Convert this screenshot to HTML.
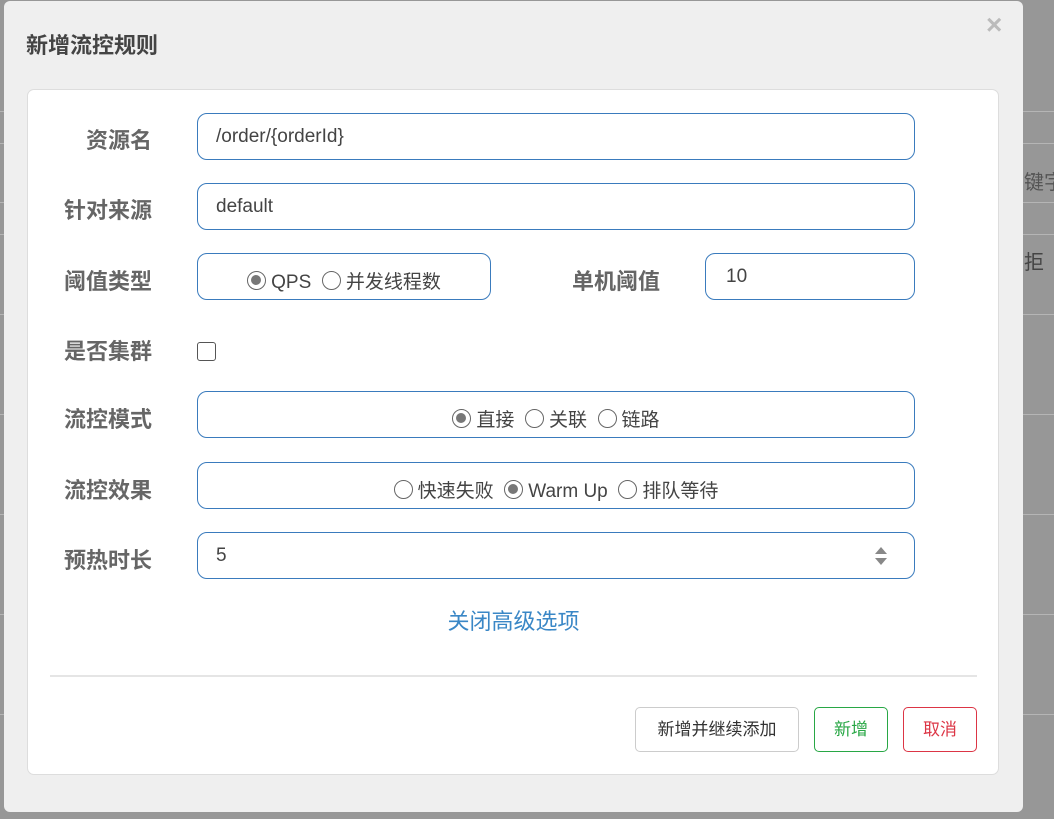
<!DOCTYPE html>
<html><head><meta charset="utf-8"><style>
*{box-sizing:border-box;margin:0;padding:0}
body{width:1054px;height:819px;background:#979797;position:relative;overflow:hidden;font-family:"Liberation Sans","Noto Sans CJK SC",sans-serif}
.hl{position:absolute;height:1px;background:#b5b5b5;left:0;width:1054px}
.modal{position:absolute;left:4px;top:1px;width:1019px;height:811px;background:#efefef;border-radius:6px}
.title{position:absolute;left:22px;top:27px;font-size:22px;font-weight:bold;color:#444}
.close{position:absolute;left:982px;top:8px;font-size:28px;color:#bbb;font-weight:bold}
.card{position:absolute;left:27px;top:89px;width:972px;height:686px;background:#fff;border:1px solid #ddd;border-radius:7px}
.lbl{position:absolute;font-size:22px;font-weight:bold;color:#666;text-align:right;width:130px}
.inp{position:absolute;border:1px solid #3a7bbd;border-radius:10px;height:47px;font-size:19px;color:#444;padding-left:18px;line-height:45px}
.r{display:inline-block;width:19px;height:19px;border:1.5px solid #666;border-radius:50%;vertical-align:-2px;margin-right:5px;position:relative}
.r.on::after{content:"";position:absolute;left:3px;top:3px;width:10px;height:10px;border-radius:50%;background:#777}
.ctr{text-align:center;padding-left:0}
.btn{position:absolute;top:707px;height:45px;border-radius:5px;font-size:17px;text-align:center;line-height:43px;background:#fff}
</style></head><body>
<div class="hl" style="top:111px"></div><div class="hl" style="top:143px"></div><div class="hl" style="top:202px"></div><div class="hl" style="top:234px"></div><div class="hl" style="top:314px"></div><div class="hl" style="top:414px"></div><div class="hl" style="top:514px"></div><div class="hl" style="top:614px"></div><div class="hl" style="top:714px"></div>
<div style="position:absolute;left:1024px;top:166px;font-size:20px;color:#555;white-space:nowrap">键字</div>
<div style="position:absolute;left:1024px;top:246px;font-size:20px;color:#444;white-space:nowrap">拒</div>
<div class="modal">
<div class="title">新增流控规则</div>
<div class="close">×</div>
</div>
<div class="card"></div>
<div class="lbl" style="left:22px;top:123px">资源名</div>
<div class="inp" style="left:197px;top:113px;width:718px">/order/{orderId}</div>
<div class="lbl" style="left:22px;top:193px">针对来源</div>
<div class="inp" style="left:197px;top:183px;width:718px">default</div>
<div class="lbl" style="left:22px;top:264px">阈值类型</div>
<div class="inp ctr" style="left:197px;top:253px;width:294px;padding-top:6px"><span class="r on"></span>QPS &nbsp;<span class="r"></span>并发线程数</div>
<div class="lbl" style="left:530px;top:264px">单机阈值</div>
<div class="inp" style="left:705px;top:253px;width:210px;padding-left:20px;line-height:45px">10</div>
<div class="lbl" style="left:22px;top:334px">是否集群</div>
<div style="position:absolute;left:197px;top:342px;width:19px;height:19px;border:1.5px solid #555;border-radius:3px"></div>
<div class="lbl" style="left:22px;top:402px">流控模式</div>
<div class="inp ctr" style="left:197px;top:391px;width:718px;padding-top:6px"><span class="r on"></span>直接 &nbsp;<span class="r"></span>关联 &nbsp;<span class="r"></span>链路</div>
<div class="lbl" style="left:22px;top:473px">流控效果</div>
<div class="inp ctr" style="left:197px;top:462px;width:718px;padding-top:6px"><span class="r"></span>快速失败 &nbsp;<span class="r on"></span>Warm Up &nbsp;<span class="r"></span>排队等待</div>
<div class="lbl" style="left:22px;top:543px">预热时长</div>
<div class="inp" style="left:197px;top:532px;width:718px">5
<svg style="position:absolute;left:676px;top:12px" width="14" height="22"><path d="M7 2L13 9H1Z" fill="#888"/><path d="M7 20L13 13H1Z" fill="#888"/></svg></div>
<div style="position:absolute;left:0;width:1027px;top:604px;text-align:center;font-size:22px;color:#3a87c6">关闭高级选项</div>
<div style="position:absolute;left:50px;top:675px;width:927px;height:2px;background:#e5e5e5"></div>
<div class="btn" style="left:635px;width:164px;border:1px solid #ccc;color:#333">新增并继续添加</div>
<div class="btn" style="left:814px;width:74px;border:1px solid #28a745;color:#28a745">新增</div>
<div class="btn" style="left:903px;width:74px;border:1px solid #dc3545;color:#dc3545">取消</div>
</body></html>
